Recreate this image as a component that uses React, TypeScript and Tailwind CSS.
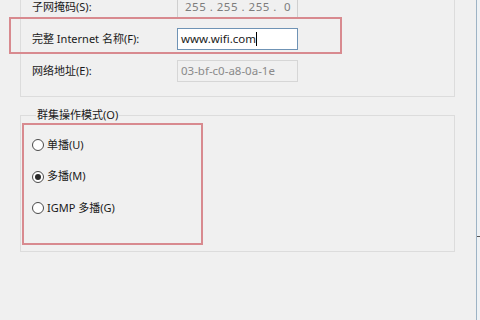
import React from 'react';

const font = "font-['Noto_Sans','Noto_Sans_CJK_SC',sans-serif]";

function Field({ label, children }: { label: string; children: React.ReactNode }) {
  return (
    <>
      <div className="flex items-center h-[22px] text-[11px] text-[#1a1a1a]">{label}</div>
      {children}
    </>
  );
}

function Radio({ label, checked }: { label: string; checked?: boolean }) {
  return (
    <div className="flex items-center h-[20px] gap-[3px] text-[11px] text-[#1a1a1a]">
      <span className="w-[12px] h-[12px] rounded-full border border-[#4a4a4a] bg-white flex items-center justify-center">
        {checked && <span className="w-[6px] h-[6px] rounded-full bg-[#2a2a2a]" />}
      </span>
      <span>{label}</span>
    </div>
  );
}

export default function App() {
  return (
    <div className={`relative w-[480px] h-[320px] overflow-hidden bg-[#f0f0f0] flex ${font}`}>
      <div className="flex-1 pl-[20px] pr-[21px]">
        {/* Address group */}
        <div className="mt-[-18px] border border-[#dcdcdc] pl-[11px] pt-[13px] pb-[14px]">
          <div className="grid grid-cols-[145px_121px] gap-y-[10px]">
            <Field label="子网掩码(S):">
              <div className="h-[22px] border border-[#cfcfcf] bg-[#f0f0f0] flex items-center pl-[7px] text-[11.5px] text-[#7c7c7c] tracking-[0.5px] whitespace-pre">
                {'255 . 255 . 255 .  0'}
              </div>
            </Field>
            <Field label="完整 Internet 名称(F):">
              <div className="h-[22px] border border-[#6f93b5] bg-white flex items-center pl-[3px] text-[11.5px] text-[#1a1a1a]">
                <span>www.wifi.com</span>
                <span className="w-px h-[14px] bg-black" />
              </div>
            </Field>
            <Field label="网络地址(E):">
              <div className="h-[22px] border border-[#d6d6d6] bg-[#f0f0f0] flex items-center pl-[3px] text-[11.5px] text-[#8a8a8a]">
                03-bf-c0-a8-0a-1e
              </div>
            </Field>
          </div>
        </div>

        {/* Cluster operation mode */}
        <fieldset className="mt-[10px] border border-[#dcdcdc] h-[145px] pl-[11px]">
          <legend className="ml-[4px] px-[1px] text-[11px] text-[#1a1a1a] leading-[16px]">群集操作模式(O)</legend>
          <div className="flex flex-col gap-[11.5px] pt-[12px]">
            <Radio label="单播(U)" />
            <Radio label="多播(M)" checked />
            <Radio label="IGMP 多播(G)" />
          </div>
        </fieldset>
      </div>

      {/* window edge */}
      <div className="w-px bg-[#9db3c5]" />
      <div className="w-[3px] bg-[#eef2f5] flex flex-col">
        <div className="h-[236px]" />
        <div className="h-px bg-[#555]" />
      </div>

      {/* red annotation boxes */}
      <div className="absolute left-[9px] top-[17px] w-[333px] h-[37px] border-2 border-[#d88a8f]" />
      <div className="absolute left-[22px] top-[123px] w-[181px] h-[122px] border-2 border-[#d88a8f]" />
    </div>
  );
}
